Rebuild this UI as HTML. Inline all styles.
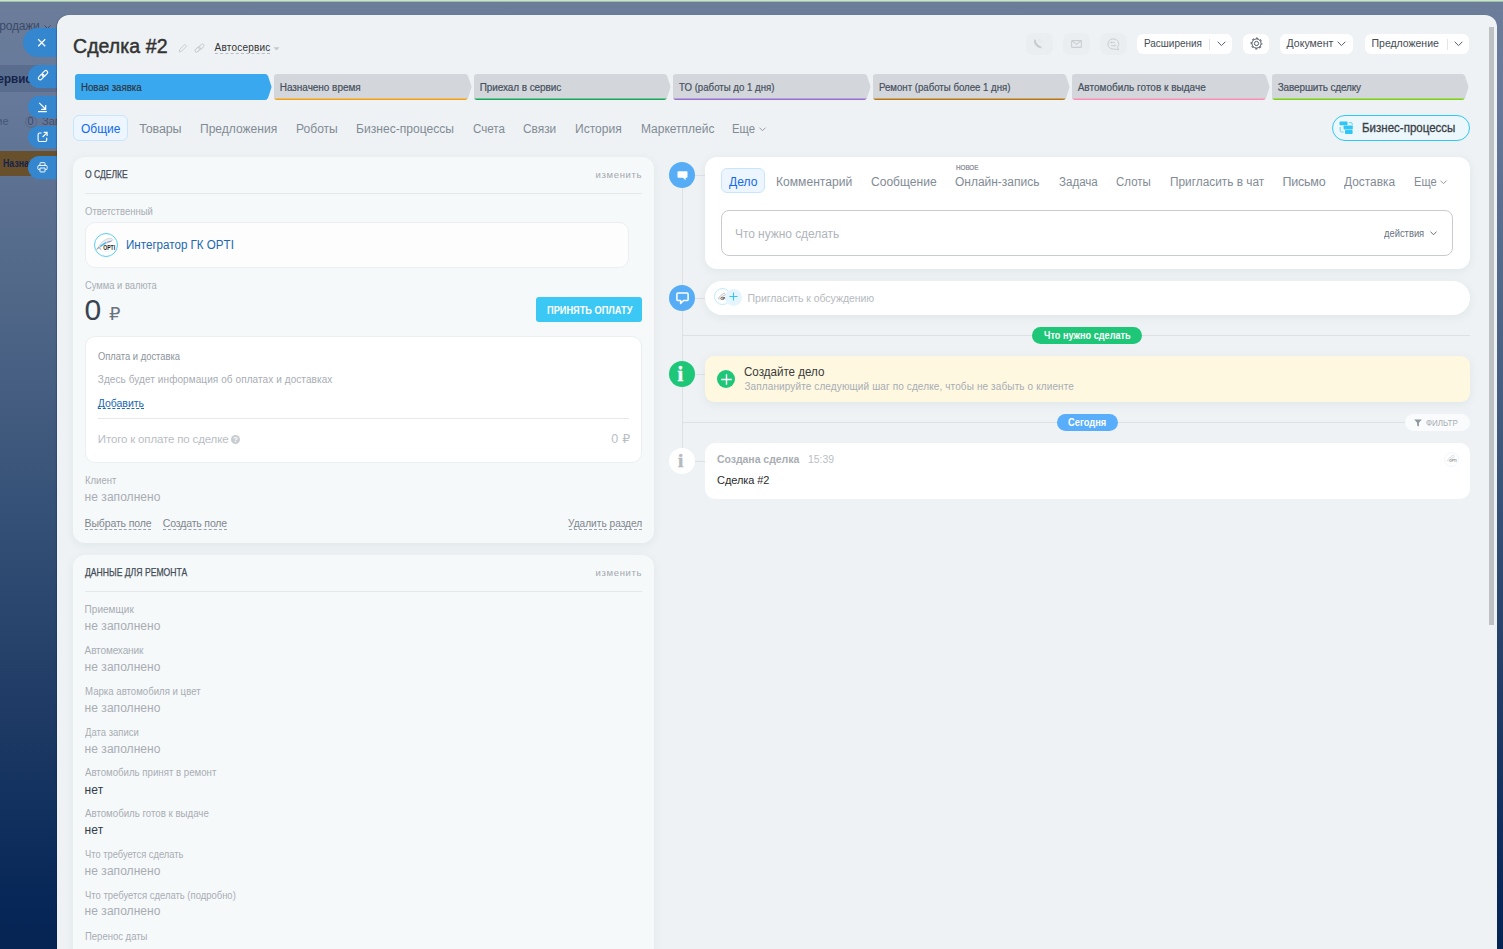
<!DOCTYPE html>
<html lang="ru">
<head>
<meta charset="utf-8">
<title>Сделка #2</title>
<style>
html,body{margin:0;padding:0;}
body{width:1503px;height:949px;overflow:hidden;position:relative;font-family:'Liberation Sans',sans-serif;
  background:linear-gradient(180deg,#6b7d99 0px,#66799a 100px,#5b7090 200px,#506788 300px,#375278 500px,#203c66 700px,#072758 900px,#052454 949px);}
.a{position:absolute;box-sizing:border-box;}
.t{position:absolute;white-space:nowrap;line-height:1;}
#topbar{left:0;top:0;width:1503px;height:2px;background:linear-gradient(180deg,#c7e6c9 0,#c7e6c9 1px,#a3bcae 1px,#a3bcae 2px);}
#panel{left:57px;top:15px;width:1440px;height:934px;background:#eef2f4;border-radius:12px 12px 0 0;box-shadow:-1px 0 1px rgba(8,25,60,.22);}
.sb{background:#3486cf;border-radius:15px 0 0 15px;}
.card{background:#f6f9fa;border-radius:12px;box-shadow:0 2px 10px rgba(90,110,130,.09);}
.wcard{background:#fff;border-radius:12px;box-shadow:0 2px 10px rgba(90,110,130,.09);}
.stage{height:26px;top:74px;}
.hbtn{background:#fff;border-radius:6px;top:34px;height:20px;}
.gbtn{background:#ebeef1;border-radius:7px;top:32.5px;height:22px;}
.circ{border-radius:50%;}
.dash{border-bottom:1px dashed;height:0;}
svg{position:absolute;overflow:visible;}

</style>
</head>
<body>
<!-- background page fragments visible left of the slider -->
<div class="a" style="left:0;top:65px;width:57px;height:27px;background:rgba(55,75,110,.28)"></div>
<div class="a" style="left:0;top:151px;width:57px;height:25px;background:#69502d"></div>
<span class="t" style="right:1463.5px;top:20px;font-size:12px;color:#3b4a68;letter-spacing:-0.2px">Продажи</span>
<svg style="left:44px;top:24.5px" width="7" height="5" viewBox="0 0 7 5"><path d="M0.5 0.5 L3.5 3.5 L6.5 0.5" fill="none" stroke="#3b4a68" stroke-width="1"/></svg>
<span class="t" style="right:1471.6px;top:72px;font-size:13.5px;font-weight:700;color:#14234a;transform:scaleX(.86);transform-origin:100% 50%">Автосервис</span>
<span class="t" style="right:1494.5px;top:116px;font-size:11px;color:#46567a;">ние</span>
<div class="a circ" style="left:25px;top:116px;width:11.5px;height:12px;border:1px solid #586a8a;"></div>
<span class="t" style="left:27.6px;top:116px;font-size:11px;color:#3a4a70;">0</span>
<span class="t" style="left:42px;top:116px;font-size:11px;color:#3f4f72;">Зап</span>
<span class="t" style="left:2.6px;top:158px;font-size:10.5px;font-weight:700;color:#14234a;transform:scaleX(.84);transform-origin:0 50%">Назначено</span>

<div id="topbar" class="a"></div>

<!-- side buttons -->
<div class="a sb" style="left:23px;top:28px;width:40px;height:29px;"></div>
<div class="a sb" style="left:28px;top:65px;width:35px;height:23px;border-radius:12px 0 0 12px"></div>
<div class="a sb" style="left:28px;top:96px;width:35px;height:22px;border-radius:12px 0 0 12px"></div>
<div class="a sb" style="left:28px;top:126px;width:35px;height:22px;border-radius:12px 0 0 12px"></div>
<div class="a sb" style="left:28px;top:156px;width:35px;height:23px;border-radius:12px 0 0 12px"></div>
<svg style="left:37px;top:38px" width="10" height="10" viewBox="0 0 10 10"><path d="M1.2 1.2 L8.2 8.2 M8.2 1.2 L1.2 8.2" stroke="#fff" stroke-width="1.25" fill="none"/></svg>
<svg style="left:37px;top:70px" width="12" height="12" viewBox="0 0 12 12"><g fill="none" stroke="#fff" stroke-width="1.15"><rect x="0.9" y="5.2" width="6.6" height="3.6" rx="1.8" transform="rotate(-45 4.2 7)"/><rect x="4.5" y="1.6" width="6.6" height="3.6" rx="1.8" transform="rotate(-45 7.8 3.4)"/></g></svg>
<svg style="left:37px;top:101px" width="11" height="12" viewBox="0 0 11 12"><path d="M2.2 1.8 L8.4 8 M4.2 8.4 H8.7 V3.9 M1 10.6 H9.8" stroke="#fff" stroke-width="1.15" fill="none"/></svg>
<svg style="left:37px;top:131px" width="11" height="12" viewBox="0 0 11 12"><path d="M4.6 2 H2.6 Q1.1 2 1.1 3.5 V9 Q1.1 10.5 2.6 10.5 H8.2 Q9.7 10.5 9.7 9 V6.8 M5.6 6 L9.8 1.8 M6.6 1.4 H10.1 V4.9" stroke="#fff" stroke-width="1.15" fill="none"/></svg>
<svg style="left:37px;top:162.4px" width="11" height="10.6" viewBox="0 0 13 13"><path d="M3.4 4.2 V1.6 Q3.4 0.8 4.2 0.8 H8.8 Q9.6 0.8 9.6 1.6 V4.2 M3.2 9.4 H2.2 Q0.8 9.4 0.8 8 V5.6 Q0.8 4.2 2.2 4.2 H10.8 Q12.2 4.2 12.2 5.6 V8 Q12.2 9.4 10.8 9.4 H9.8 M3.4 7.4 H9.6 V11.4 Q9.6 12.2 8.8 12.2 H4.2 Q3.4 12.2 3.4 11.4 Z" stroke="#fff" stroke-width="1.15" fill="none"/></svg>

<div id="panel" class="a"></div>
<!-- scrollbar -->
<div class="a" style="left:1489px;top:27px;width:5px;height:598px;background:#bdc1c4;"></div>

<!-- title icons -->
<svg style="left:178px;top:43px" width="10" height="10" viewBox="0 0 10 10"><path d="M1.2 8.8 L1.8 6.4 L6.8 1.4 L8.6 3.2 L3.6 8.2 Z" fill="none" stroke="#c9ced3" stroke-width="1"/></svg>
<svg style="left:193.5px;top:42.5px" width="11" height="11" viewBox="0 0 11 11"><g fill="none" stroke="#c9ced3" stroke-width="1"><rect x="0.6" y="4.9" width="6.2" height="3.2" rx="1.6" transform="rotate(-45 3.7 6.5)"/><rect x="4.2" y="2.1" width="6.2" height="3.2" rx="1.6" transform="rotate(-45 7.3 3.7)"/></g></svg>
<div class="a dash" style="left:215px;top:53px;width:55px;border-color:#b8bdc3"></div>
<svg style="left:272.6px;top:47px" width="7" height="4" viewBox="0 0 7 4"><path d="M0.5 0.3 L6.5 0.3 L3.5 3.6 Z" fill="#c3c8cd"/></svg>

<!-- header buttons -->
<div class="a gbtn" style="left:1026px;width:27px;"></div>
<div class="a gbtn" style="left:1063px;width:27px;"></div>
<div class="a gbtn" style="left:1099.5px;width:27px;"></div>
<div class="a hbtn" style="left:1137px;width:95px;"></div>
<div class="a" style="left:1209px;top:38.5px;width:1px;height:11px;background:#e3e6e9"></div>
<div class="a hbtn" style="left:1243px;width:26px;"></div>
<div class="a hbtn" style="left:1280px;width:73px;"></div>
<div class="a hbtn" style="left:1365px;width:104px;"></div>
<div class="a" style="left:1446.5px;top:38.5px;width:1px;height:11px;background:#e3e6e9"></div>
<!-- chevrons -->
<svg style="left:1217px;top:41px" width="9" height="6" viewBox="0 0 9 6"><path d="M0.7 0.8 L4.5 4.6 L8.3 0.8" fill="none" stroke="#525c69" stroke-width="1"/></svg>
<svg style="left:1337px;top:41px" width="9" height="6" viewBox="0 0 9 6"><path d="M0.7 0.8 L4.5 4.6 L8.3 0.8" fill="none" stroke="#525c69" stroke-width="1"/></svg>
<svg style="left:1454px;top:41px" width="9" height="6" viewBox="0 0 9 6"><path d="M0.7 0.8 L4.5 4.6 L8.3 0.8" fill="none" stroke="#525c69" stroke-width="1"/></svg>
<!-- phone / mail / chat / gear icons -->
<svg style="left:1033px;top:39px" width="12" height="10" viewBox="0 0 12 10"><path d="M2 1.6 C1.6 4 4.2 7.4 7.4 8.2" fill="none" stroke="#c6cbd0" stroke-width="2.1" stroke-linecap="round"/><path d="M5.4 1.6 C6.6 1.7 7.5 2.5 7.7 3.7 M6 0.2 C7.8 0.4 9 1.6 9.2 3.3" fill="none" stroke="#d9dde1" stroke-width="0.8" stroke-dasharray="1 0.7"/></svg>
<svg style="left:1070.6px;top:39.9px" width="11" height="8" viewBox="0 0 11 8"><rect x="0.6" y="0.6" width="9.8" height="6.8" rx="0.6" fill="none" stroke="#c9ced3" stroke-width="1.1"/><path d="M0.9 0.9 L5.5 4.4 L10.1 0.9" fill="none" stroke="#c9ced3" stroke-width="1.1"/></svg>
<svg style="left:1106.6px;top:37.6px" width="13" height="13" viewBox="0 0 13 13"><path d="M6 0.9 A5.1 5.1 0 1 0 6 11.1 L8.6 11.1 L11.6 11.9 L10.6 9.2 A5.1 5.1 0 0 0 6 0.9 Z" fill="none" stroke="#c9ced3" stroke-width="1"/><path d="M3.4 4.5 H8 M3.4 4.5 L4.6 3.5 M3.4 4.5 L4.6 5.5 M4 7.6 H8.6 M8.6 7.6 L7.4 6.6 M8.6 7.6 L7.4 8.6" fill="none" stroke="#c9ced3" stroke-width="0.9"/></svg>
<svg style="left:1249.6px;top:37.4px" width="13" height="13" viewBox="0 0 13 13"><circle cx="6.5" cy="6.5" r="5.35" fill="none" stroke="#5a636f" stroke-width="1.1" stroke-dasharray="2.3 1.9" stroke-dashoffset="1.15"/><circle cx="6.5" cy="6.5" r="4.55" fill="none" stroke="#5a636f" stroke-width="1"/><circle cx="6.5" cy="6.5" r="2.1" fill="none" stroke="#5a636f" stroke-width="1"/></svg>

<!-- stages -->
<div class="a stage" style="left:75px;width:196.6px;background:#39a8ef;clip-path:path('M3 0 H190.0 Q192.2 0 193.1 2.2 L196.6 13 L193.1 23.8 Q192.2 26 190.0 26 H3 Q0 26 0 23 V3 Q0 0 3 0 Z')"></div>
<div class="a stage" style="left:274px;width:197.6px;background:linear-gradient(180deg,#d3d7dc 0,#d3d7dc 24px,#f7a00a 25px,#f7a00a 26px);clip-path:path('M3 0 H191.0 Q193.2 0 194.1 2.2 L197.6 13 L194.1 23.8 Q193.2 26 191.0 26 H3 Q0 26 0 23 V3 Q0 0 3 0 Z')"></div>
<div class="a stage" style="left:474px;width:196.6px;background:linear-gradient(180deg,#d3d7dc 0,#d3d7dc 24px,#15a857 25px,#15a857 26px);clip-path:path('M3 0 H190.0 Q192.2 0 193.1 2.2 L196.6 13 L193.1 23.8 Q192.2 26 190.0 26 H3 Q0 26 0 23 V3 Q0 0 3 0 Z')"></div>
<div class="a stage" style="left:673px;width:197.6px;background:linear-gradient(180deg,#d3d7dc 0,#d3d7dc 24px,#9a6dd0 25px,#9a6dd0 26px);clip-path:path('M3 0 H191.0 Q193.2 0 194.1 2.2 L197.6 13 L194.1 23.8 Q193.2 26 191.0 26 H3 Q0 26 0 23 V3 Q0 0 3 0 Z')"></div>
<div class="a stage" style="left:873px;width:196.6px;background:linear-gradient(180deg,#d3d7dc 0,#d3d7dc 24px,#b9770e 25px,#b9770e 26px);clip-path:path('M3 0 H190.0 Q192.2 0 193.1 2.2 L196.6 13 L193.1 23.8 Q192.2 26 190.0 26 H3 Q0 26 0 23 V3 Q0 0 3 0 Z')"></div>
<div class="a stage" style="left:1072px;width:197.6px;background:linear-gradient(180deg,#d3d7dc 0,#d3d7dc 24px,#ff8db3 25px,#ff8db3 26px);clip-path:path('M3 0 H191.0 Q193.2 0 194.1 2.2 L197.6 13 L194.1 23.8 Q193.2 26 191.0 26 H3 Q0 26 0 23 V3 Q0 0 3 0 Z')"></div>
<div class="a stage" style="left:1272px;width:196.6px;background:linear-gradient(180deg,#d3d7dc 0,#d3d7dc 24px,#79d20a 25px,#79d20a 26px);clip-path:path('M3 0 H190.0 Q192.2 0 193.1 2.2 L196.6 13 L193.1 23.8 Q192.2 26 190.0 26 H3 Q0 26 0 23 V3 Q0 0 3 0 Z')"></div>

<!-- main tabs -->
<div class="a" style="left:73px;top:115px;width:55px;height:25.5px;background:#edf6fe;border:1px solid #c7e5fe;border-radius:6px"></div>
<svg style="left:759px;top:127px" width="7" height="5" viewBox="0 0 7 5"><path d="M0.5 0.7 L3.5 3.7 L6.5 0.7" fill="none" stroke="#959ca4" stroke-width="1"/></svg>
<!-- BP button -->
<div class="a" style="left:1332px;top:114.5px;width:138px;height:26px;background:#ecf7fc;border:1.2px solid #2fc6f6;border-radius:13px"></div>
<svg style="left:1339px;top:121px" width="15" height="14" viewBox="0 0 15 14"><g fill="#2fc6f6"><rect x="0.5" y="0.4" width="8" height="3.8" rx="0.7"/><rect x="4.6" y="4.5" width="9.2" height="4" rx="0.7"/><rect x="6" y="9.1" width="7.6" height="3.8" rx="0.7"/></g><g fill="none" stroke="#62d3f7" stroke-width="1"><path d="M10 1.6 H12 Q13.2 1.6 13.2 2.8 V4"/><path d="M1.2 6 V9.8 Q1.2 11 2.4 11 H4.6"/></g></svg>

<!-- LEFT: card 1 -->
<div class="a card" style="left:73px;top:157px;width:581px;height:386px;"></div>
<div class="a" style="left:85px;top:193px;width:557px;height:1px;background:#e4e8eb"></div>
<div class="a" style="left:85px;top:222px;width:543.6px;height:45.5px;background:#fdfdfd;border:1px solid #eceff1;border-radius:10px"></div>
<div class="a circ" style="left:94px;top:233px;width:24px;height:24px;background:#fff;border:1px solid #55cff7"></div>
<svg style="left:96px;top:236px" width="20" height="17" viewBox="0 0 20 17"><path d="M0.7 13.5 C3.5 7.5 8.5 3 14 2.2 C16 2.4 17 3.2 16.6 4.2 C12.5 6.5 7 9.5 0.7 13.5 Z" fill="#eceef0" stroke="#b4b9be" stroke-width="0.5"/><path d="M4.1 10.5 L10.2 6.3" stroke="#35b6e8" stroke-width="1.2"/><path d="M11 6.2 L15.5 5.1" stroke="#7583b8" stroke-width="0.8"/><path d="M0.7 13.5 L3 11.2 L4.9 13.7" fill="none" stroke="#8a8f94" stroke-width="0.9"/><path d="M7.8 15.3 H15" stroke="#dcdfe2" stroke-width="0.4"/><text x="7.2" y="13.9" textLength="11.9" lengthAdjust="spacingAndGlyphs" font-family="'Liberation Sans',sans-serif" font-size="6.8" font-weight="700" fill="#1d1d1d">OPTI</text></svg>
<div class="a" style="left:536px;top:297px;width:106px;height:25px;background:#3bc8f5;border-radius:3px"></div>
<div class="a" style="left:85px;top:336px;width:557px;height:126.5px;background:#fff;border:1px solid #eceff1;border-radius:10px"></div>
<div class="a dash" style="left:98px;top:408px;width:46px;border-color:#2067b0"></div>
<div class="a" style="left:98px;top:418px;width:531px;height:1px;background:#e4e8ec"></div>
<div class="a circ" style="left:231px;top:434.5px;width:9px;height:9px;background:#c9cdd2"></div>
<div class="a dash" style="left:85px;top:529px;width:66px;border-color:#9aa0a7"></div>
<div class="a dash" style="left:163px;top:529px;width:64px;border-color:#9aa0a7"></div>
<div class="a dash" style="left:569px;top:529px;width:73px;border-color:#9aa0a7"></div>
<!-- LEFT: card 2 -->
<div class="a card" style="left:73px;top:555px;width:581px;height:420px;"></div>
<div class="a" style="left:85px;top:591px;width:557px;height:1px;background:#e4e8eb"></div>

<!-- RIGHT: timeline -->
<div class="a" style="left:682px;top:175px;width:1px;height:286px;background:#dde1e4"></div>
<div class="a" style="left:682px;top:175px;width:24px;height:1px;background:#dde1e4"></div>
<div class="a" style="left:682px;top:298px;width:24px;height:1px;background:#dde1e4"></div>
<div class="a" style="left:682px;top:335px;width:788px;height:1px;background:#dde1e4"></div>
<div class="a" style="left:682px;top:374px;width:24px;height:1px;background:#dde1e4"></div>
<div class="a" style="left:682px;top:422px;width:788px;height:1px;background:#dde1e4"></div>
<div class="a" style="left:682px;top:461px;width:24px;height:1px;background:#dde1e4"></div>
<!-- card: editor -->
<div class="a wcard" style="left:705px;top:157px;width:765px;height:112px;"></div>
<div class="a" style="left:721px;top:168px;width:44px;height:25px;background:#edf6fe;border:1px solid #c7e5fe;border-radius:6px"></div>
<div class="a" style="left:721px;top:209.5px;width:732px;height:46.5px;background:#fff;border:1px solid #c8ccd0;border-radius:8px"></div>
<svg style="left:1429.5px;top:231px" width="7" height="5" viewBox="0 0 7 5"><path d="M0.5 0.6 L3.5 3.8 L6.5 0.6" fill="none" stroke="#6a737f" stroke-width="1"/></svg>
<svg style="left:1440px;top:180px" width="7" height="5" viewBox="0 0 7 5"><path d="M0.5 0.7 L3.5 3.7 L6.5 0.7" fill="none" stroke="#959ca4" stroke-width="1"/></svg>
<!-- card: invite -->
<div class="a wcard" style="left:705px;top:281px;width:765px;height:34px;border-radius:17px"></div>
<div class="a circ" style="left:713.6px;top:287.6px;width:17.6px;height:17.6px;background:#fff;border:1px solid #bfeaf9"></div>
<svg style="left:717px;top:292px" width="11" height="9" viewBox="0 0 11 9"><path d="M1 7 C3 4 5 2 8 1 M2 7.6 C4 5.4 6 3.6 9 2.6" fill="none" stroke="#8c959f" stroke-width="0.6"/><text x="3.4" y="7.6" font-family="'Liberation Sans',sans-serif" font-size="3.4" font-weight="700" fill="#222">OPTI</text></svg>
<div class="a circ" style="left:725px;top:288.5px;width:17px;height:17px;background:#e6f5fd;"></div>
<svg style="left:728.5px;top:292px" width="9" height="9" viewBox="0 0 9 9"><path d="M4.5 0.5 V8.5 M0.5 4.5 H8.5" stroke="#2fc6f6" stroke-width="1.1"/></svg>
<!-- pills -->
<div class="a" style="left:1032px;top:327px;width:110px;height:17px;background:#1ec677;border-radius:9px"></div>
<div class="a" style="left:1057px;top:414px;width:61px;height:17px;background:#58aefb;border-radius:9px"></div>
<div class="a" style="left:1405px;top:414px;width:65px;height:17px;background:#f9fbfc;border-radius:9px"></div>
<svg style="left:1414px;top:419px" width="8" height="8" viewBox="0 0 8 8"><path d="M0.2 0.4 H7.8 L4.9 3.8 V7.4 L3.1 6.4 V3.8 Z" fill="#8f969e"/></svg>
<!-- yellow card -->
<div class="a wcard" style="left:705px;top:356px;width:765px;height:46px;background:#fef8e1;border-radius:9px"></div>
<div class="a circ" style="left:717px;top:370px;width:18px;height:18px;background:#1ec677"></div>
<svg style="left:720.5px;top:373.5px" width="11" height="11" viewBox="0 0 11 11"><path d="M5.5 0.2 V10.8 M0.2 5.5 H10.8" stroke="#fff" stroke-width="1.4"/></svg>
<!-- created card -->
<div class="a" style="left:705px;top:443px;width:765px;height:55.5px;border-radius:10px;background:#fff"></div>
<div class="a circ" style="left:1443.5px;top:451.5px;width:15px;height:15px;background:#fff;border:1px solid #eef8fd"></div>
<svg style="left:1446px;top:454px" width="11" height="10" viewBox="0 0 11 10"><path d="M1 7 C3 4 5 2 8 1 M2 7.6 C4 5.4 6 3.6 9 2.6" fill="none" stroke="#b7bec5" stroke-width="0.5"/><text x="3.2" y="7.8" font-family="'Liberation Sans',sans-serif" font-size="3.2" font-weight="700" fill="#888">OPTI</text></svg>
<!-- timeline circles -->
<div class="a circ" style="left:669px;top:162px;width:26px;height:26px;background:#56adf6"></div>
<svg style="left:677px;top:171px" width="11" height="10" viewBox="0 0 11 10"><path d="M1.3 0.3 H9.7 Q10.5 0.3 10.5 1.1 V5.9 Q10.5 6.7 9.7 6.7 H8.6 V9.2 L6 6.7 H1.3 Q0.5 6.7 0.5 5.9 V1.1 Q0.5 0.3 1.3 0.3 Z" fill="#fff"/></svg>
<div class="a circ" style="left:669px;top:285px;width:26px;height:26px;background:#56adf6"></div>
<svg style="left:675.5px;top:292px" width="13" height="13" viewBox="0 0 13 13"><path d="M2 0.9 H11 Q12.1 0.9 12.1 2 V7.4 Q12.1 8.5 11 8.5 H7.6 L4.6 11.4 V8.5 H2 Q0.9 8.5 0.9 7.4 V2 Q0.9 0.9 2 0.9 Z" fill="none" stroke="#fff" stroke-width="1.5" stroke-linejoin="round"/></svg>
<div class="a circ" style="left:669px;top:361px;width:26px;height:26px;background:#1ec677"></div>
<div class="a circ" style="left:669px;top:448px;width:26px;height:26px;background:#fff"></div>

<div id="texts">
<span class="t" style="left:73.00px;top:37.00px;font-size:19.5px;color:#333;letter-spacing:0.072px;-webkit-text-stroke:0.45px #333;">Сделка #2</span>
<span class="t" style="left:214.50px;top:43.00px;font-size:10px;color:#333;letter-spacing:0.217px;">Автосервис</span>
<span class="t" style="left:1144.20px;top:38.00px;font-size:10.5px;color:#444b54;transform:scaleX(0.9498);transform-origin:0 50%;">Расширения</span>
<span class="t" style="left:1286.60px;top:38.00px;font-size:10.5px;color:#444b54;letter-spacing:0.026px;">Документ</span>
<span class="t" style="left:1371.60px;top:38.00px;font-size:10.5px;color:#444b54;letter-spacing:-0.024px;">Предложение</span>
<span class="t" style="left:80.70px;top:83.00px;font-size:10px;color:#2d3642;-webkit-text-stroke:0.2px #2d3642;transform:scaleX(0.9668);transform-origin:0 50%;">Новая заявка</span>
<span class="t" style="left:279.70px;top:83.00px;font-size:10px;color:#48515e;letter-spacing:-0.032px;-webkit-text-stroke:0.2px #48515e;">Назначено время</span>
<span class="t" style="left:479.70px;top:83.00px;font-size:10px;color:#48515e;letter-spacing:-0.085px;-webkit-text-stroke:0.2px #48515e;">Приехал в сервис</span>
<span class="t" style="left:678.70px;top:83.00px;font-size:10px;color:#48515e;-webkit-text-stroke:0.2px #48515e;transform:scaleX(0.9656);transform-origin:0 50%;">ТО (работы до 1 дня)</span>
<span class="t" style="left:878.70px;top:83.00px;font-size:10px;color:#48515e;-webkit-text-stroke:0.2px #48515e;transform:scaleX(0.9638);transform-origin:0 50%;">Ремонт (работы более 1 дня)</span>
<span class="t" style="left:1077.70px;top:83.00px;font-size:10px;color:#48515e;letter-spacing:0.006px;-webkit-text-stroke:0.2px #48515e;">Автомобиль готов к выдаче</span>
<span class="t" style="left:1277.70px;top:83.00px;font-size:10px;color:#48515e;letter-spacing:-0.138px;-webkit-text-stroke:0.2px #48515e;">Завершить сделку</span>
<span class="t" style="left:81.00px;top:123.00px;font-size:12.5px;color:#1169ee;transform:scaleX(0.9584);transform-origin:0 50%;">Общие</span>
<span class="t" style="left:139.20px;top:123.00px;font-size:12.5px;color:#828b95;letter-spacing:-0.133px;">Товары</span>
<span class="t" style="left:200.20px;top:123.00px;font-size:12.5px;color:#828b95;transform:scaleX(0.9635);transform-origin:0 50%;">Предложения</span>
<span class="t" style="left:296.20px;top:123.00px;font-size:12.5px;color:#828b95;transform:scaleX(0.9654);transform-origin:0 50%;">Роботы</span>
<span class="t" style="left:356.40px;top:123.00px;font-size:12.5px;color:#828b95;transform:scaleX(0.9673);transform-origin:0 50%;">Бизнес-процессы</span>
<span class="t" style="left:472.60px;top:123.00px;font-size:12.5px;color:#828b95;transform:scaleX(0.9280);transform-origin:0 50%;">Счета</span>
<span class="t" style="left:522.80px;top:123.00px;font-size:12.5px;color:#828b95;transform:scaleX(0.9481);transform-origin:0 50%;">Связи</span>
<span class="t" style="left:575.20px;top:123.00px;font-size:12.5px;color:#828b95;transform:scaleX(0.9653);transform-origin:0 50%;">История</span>
<span class="t" style="left:640.60px;top:123.00px;font-size:12.5px;color:#828b95;transform:scaleX(0.9585);transform-origin:0 50%;">Маркетплейс</span>
<span class="t" style="left:732.40px;top:123.00px;font-size:12.5px;color:#828b95;transform:scaleX(0.9042);transform-origin:0 50%;">Еще</span>
<span class="t" style="left:1361.60px;top:122.00px;font-size:12px;color:#3a3f46;-webkit-text-stroke:0.3px #3a3f46;transform:scaleX(0.9603);transform-origin:0 50%;">Бизнес-процессы</span>
<span class="t" style="left:84.60px;top:169.00px;font-size:10.5px;color:#434c58;-webkit-text-stroke:0.25px #434c58;transform:scaleX(0.8143);transform-origin:0 50%;">О СДЕЛКЕ</span>
<span class="t" style="left:595.60px;top:170.00px;font-size:9.5px;color:#a3a8ae;letter-spacing:0.657px;">изменить</span>
<span class="t" style="left:84.60px;top:207.00px;font-size:10px;color:#a8adb4;transform:scaleX(0.9493);transform-origin:0 50%;">Ответственный</span>
<span class="t" style="left:126.10px;top:239.00px;font-size:12px;color:#2067b0;transform:scaleX(0.9666);transform-origin:0 50%;">Интегратор ГК OPTI</span>
<span class="t" style="left:84.60px;top:281.00px;font-size:10px;color:#a8adb4;transform:scaleX(0.9388);transform-origin:0 50%;">Сумма и валюта</span>
<span class="t" style="left:84.40px;top:295.00px;font-size:30px;color:#3a4350;">0</span>
<span class="t" style="left:109.00px;top:305.00px;font-size:18px;color:#6a737f;font-family:'DejaVu Sans',sans-serif;">₽</span>
<span class="t" style="left:546.60px;top:305.00px;font-size:10.5px;color:#fff;font-weight:700;transform:scaleX(0.8786);transform-origin:0 50%;">ПРИНЯТЬ ОПЛАТУ</span>
<span class="t" style="left:97.80px;top:352.00px;font-size:10px;color:#8d949c;transform:scaleX(0.9378);transform-origin:0 50%;">Оплата и доставка</span>
<span class="t" style="left:97.80px;top:375.00px;font-size:10px;color:#a8adb4;letter-spacing:0.086px;">Здесь будет информация об оплатах и доставках</span>
<span class="t" style="left:97.80px;top:398.00px;font-size:10.5px;color:#2067b0;letter-spacing:-0.026px;">Добавить</span>
<span class="t" style="left:97.80px;top:434.00px;font-size:11.5px;color:#b9bec4;letter-spacing:-0.155px;">Итого к оплате по сделке</span>
<span class="t" style="left:233.30px;top:436.00px;font-size:7.5px;color:#fff;font-weight:700;">?</span>
<span class="t" style="left:611.20px;top:433.00px;font-size:12.5px;color:#b9bec4;letter-spacing:0.321px;font-family:'Liberation Sans','DejaVu Sans',sans-serif;">0 ₽</span>
<span class="t" style="left:84.60px;top:476.00px;font-size:10px;color:#a8adb4;transform:scaleX(0.9538);transform-origin:0 50%;">Клиент</span>
<span class="t" style="left:84.60px;top:491.00px;font-size:12px;color:#a8adb4;letter-spacing:0.039px;">не заполнено</span>
<span class="t" style="left:84.60px;top:518.00px;font-size:10.5px;color:#80868e;letter-spacing:-0.140px;">Выбрать поле</span>
<span class="t" style="left:162.80px;top:518.00px;font-size:10.5px;color:#80868e;letter-spacing:-0.158px;">Создать поле</span>
<span class="t" style="left:568.40px;top:518.00px;font-size:10.5px;color:#80868e;transform:scaleX(0.9648);transform-origin:0 50%;">Удалить раздел</span>
<span class="t" style="left:84.60px;top:567.00px;font-size:10.5px;color:#434c58;-webkit-text-stroke:0.25px #434c58;transform:scaleX(0.8204);transform-origin:0 50%;">ДАННЫЕ ДЛЯ РЕМОНТА</span>
<span class="t" style="left:595.60px;top:568.00px;font-size:9.5px;color:#a3a8ae;letter-spacing:0.657px;">изменить</span>
<span class="t" style="left:84.60px;top:605.00px;font-size:10px;color:#a8adb4;letter-spacing:0.029px;">Приемщик</span>
<span class="t" style="left:84.60px;top:620.00px;font-size:12px;color:#a8adb4;letter-spacing:0.039px;">не заполнено</span>
<span class="t" style="left:84.60px;top:646.00px;font-size:10px;color:#a8adb4;letter-spacing:-0.123px;">Автомеханик</span>
<span class="t" style="left:84.60px;top:661.00px;font-size:12px;color:#a8adb4;letter-spacing:0.039px;">не заполнено</span>
<span class="t" style="left:84.60px;top:687.00px;font-size:10px;color:#a8adb4;transform:scaleX(0.9627);transform-origin:0 50%;">Марка автомобиля и цвет</span>
<span class="t" style="left:84.60px;top:702.00px;font-size:12px;color:#a8adb4;letter-spacing:0.039px;">не заполнено</span>
<span class="t" style="left:84.60px;top:728.00px;font-size:10px;color:#a8adb4;transform:scaleX(0.9496);transform-origin:0 50%;">Дата записи</span>
<span class="t" style="left:84.60px;top:743.00px;font-size:12px;color:#a8adb4;letter-spacing:0.039px;">не заполнено</span>
<span class="t" style="left:84.60px;top:768.00px;font-size:10px;color:#a8adb4;transform:scaleX(0.9656);transform-origin:0 50%;">Автомобиль принят в ремонт</span>
<span class="t" style="left:84.60px;top:784.00px;font-size:12px;color:#333c48;letter-spacing:0.131px;">нет</span>
<span class="t" style="left:84.60px;top:809.00px;font-size:10px;color:#a8adb4;transform:scaleX(0.9683);transform-origin:0 50%;">Автомобиль готов к выдаче</span>
<span class="t" style="left:84.60px;top:824.00px;font-size:12px;color:#333c48;letter-spacing:0.131px;">нет</span>
<span class="t" style="left:84.60px;top:850.00px;font-size:10px;color:#a8adb4;transform:scaleX(0.9337);transform-origin:0 50%;">Что требуется сделать</span>
<span class="t" style="left:84.60px;top:865.00px;font-size:12px;color:#a8adb4;letter-spacing:0.039px;">не заполнено</span>
<span class="t" style="left:84.60px;top:891.00px;font-size:10px;color:#a8adb4;transform:scaleX(0.9463);transform-origin:0 50%;">Что требуется сделать (подробно)</span>
<span class="t" style="left:84.60px;top:905.00px;font-size:12px;color:#a8adb4;letter-spacing:0.039px;">не заполнено</span>
<span class="t" style="left:84.60px;top:932.00px;font-size:10px;color:#a8adb4;transform:scaleX(0.9500);transform-origin:0 50%;">Перенос даты</span>
<span class="t" style="left:84.60px;top:946.00px;font-size:12px;color:#a8adb4;letter-spacing:0.039px;">не заполнено</span>
<span class="t" style="left:729.00px;top:176.00px;font-size:12.5px;color:#1169ee;transform:scaleX(0.9663);transform-origin:0 50%;">Дело</span>
<span class="t" style="left:776.20px;top:176.00px;font-size:12.5px;color:#828b95;transform:scaleX(0.9678);transform-origin:0 50%;">Комментарий</span>
<span class="t" style="left:871.40px;top:176.00px;font-size:12.5px;color:#828b95;transform:scaleX(0.9643);transform-origin:0 50%;">Сообщение</span>
<span class="t" style="left:955.40px;top:176.00px;font-size:12.5px;color:#828b95;transform:scaleX(0.9577);transform-origin:0 50%;">Онлайн-запись</span>
<span class="t" style="left:1058.60px;top:176.00px;font-size:12.5px;color:#828b95;transform:scaleX(0.9252);transform-origin:0 50%;">Задача</span>
<span class="t" style="left:1115.80px;top:176.00px;font-size:12.5px;color:#828b95;transform:scaleX(0.9192);transform-origin:0 50%;">Слоты</span>
<span class="t" style="left:1169.60px;top:176.00px;font-size:12.5px;color:#828b95;transform:scaleX(0.9475);transform-origin:0 50%;">Пригласить в чат</span>
<span class="t" style="left:1282.40px;top:176.00px;font-size:12.5px;color:#828b95;letter-spacing:-0.214px;">Письмо</span>
<span class="t" style="left:1344.20px;top:176.00px;font-size:12.5px;color:#828b95;transform:scaleX(0.9537);transform-origin:0 50%;">Доставка</span>
<span class="t" style="left:1414.00px;top:176.00px;font-size:12.5px;color:#828b95;transform:scaleX(0.8885);transform-origin:0 50%;">Еще</span>
<span class="t" style="left:956.00px;top:165.00px;font-size:6.5px;color:#7f8791;-webkit-text-stroke:0.2px #7f8791;transform:scaleX(0.9628);transform-origin:0 50%;">НОВОЕ</span>
<span class="t" style="left:735.00px;top:228.00px;font-size:12px;color:#b0b5bb;letter-spacing:-0.061px;">Что нужно сделать</span>
<span class="t" style="left:1384.20px;top:229.00px;font-size:10px;color:#6a737f;transform:scaleX(0.9373);transform-origin:0 50%;">действия</span>
<span class="t" style="left:747.60px;top:293.00px;font-size:10.5px;color:#b5bac0;letter-spacing:-0.040px;">Пригласить к обсуждению</span>
<span class="t" style="left:1044.20px;top:330.00px;font-size:10.5px;color:#fff;font-weight:700;transform:scaleX(0.8695);transform-origin:0 50%;">Что нужно сделать</span>
<span class="t" style="left:744.40px;top:366.00px;font-size:12px;color:#3a3a3a;transform:scaleX(0.9654);transform-origin:0 50%;">Создайте дело</span>
<span class="t" style="left:744.40px;top:382.00px;font-size:10px;color:#a8adb4;letter-spacing:0.119px;">Запланируйте следующий шаг по сделке, чтобы не забыть о клиенте</span>
<span class="t" style="left:1068.20px;top:417.00px;font-size:10.5px;color:#fff;font-weight:700;transform:scaleX(0.8868);transform-origin:0 50%;">Сегодня</span>
<span class="t" style="left:1426.40px;top:419.00px;font-size:8.5px;color:#a8adb4;transform:scaleX(0.9422);transform-origin:0 50%;">ФИЛЬТР</span>
<span class="t" style="left:717.00px;top:454.00px;font-size:10.5px;color:#a8adb4;font-weight:700;letter-spacing:-0.043px;">Создана сделка</span>
<span class="t" style="left:807.60px;top:454.00px;font-size:11px;color:#b9bec4;transform:scaleX(0.9444);transform-origin:0 50%;">15:39</span>
<span class="t" style="left:717.00px;top:475.00px;font-size:11px;color:#2b2b2b;letter-spacing:-0.067px;">Сделка #2</span>
<span class="t" style="left:677.60px;top:364.00px;font-size:20px;color:#fff;font-weight:700;-webkit-text-stroke:0.5px #fff;font-family:'Liberation Serif',serif;">i</span>
<span class="t" style="left:678.00px;top:451.00px;font-size:19px;color:#b4b9bf;font-weight:700;-webkit-text-stroke:0.5px #b4b9bf;font-family:'Liberation Serif',serif;">i</span>
</div>
</body>
</html>
